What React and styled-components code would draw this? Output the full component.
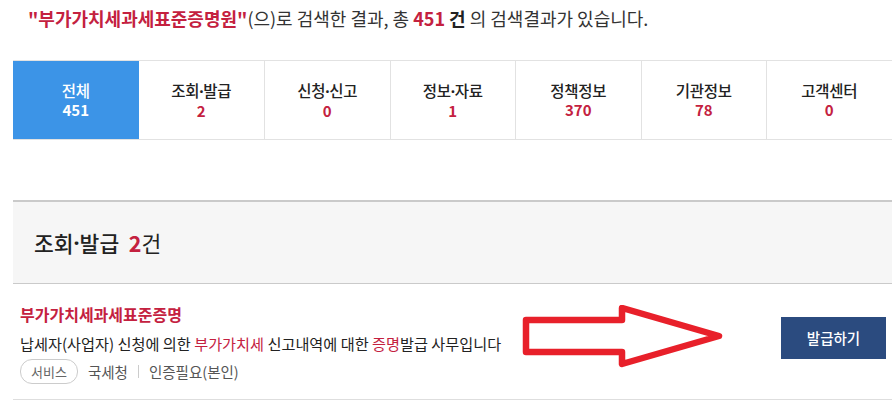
import React from 'react';
import styled, { createGlobalStyle } from 'styled-components';

const categories = [
  { label: ['조회', '발급'], count: 2 },
  { label: ['신청', '신고'], count: 0 },
  { label: ['정보', '자료'], count: 1 },
  { label: ['정책정보'], count: 370 },
  { label: ['기관정보'], count: 78 },
  { label: ['고객센터'], count: 0 },
];

// joins label parts with a narrow latin middle dot
const Dotted = ({ parts }) =>
  parts.map((p, i) => (
    <React.Fragment key={p}>
      {i > 0 && <Dot>·</Dot>}
      {p}
    </React.Fragment>
  ));

const App = () => {
  return (
    <>
      <GlobalStyle />
      <Page>
        <Summary>
          <Strong>"부가가치세과세표준증명원"</Strong>(으)로 검색한 결과, 총 <Strong>451</Strong>{' '}
          <Bold>건</Bold> 의 검색결과가 있습니다.
        </Summary>

        <Tabs>
          <Tab $active>
            <TabLabel>전체</TabLabel>
            <TabCount>451</TabCount>
          </Tab>
          {categories.map((c) => (
            <Tab key={c.label.join('')}>
              <TabLabel><Dotted parts={c.label} /></TabLabel>
              <TabCount>{c.count}</TabCount>
            </Tab>
          ))}
        </Tabs>

        <SectionHeader>
          <Dotted parts={['조회', '발급']} />{'  '}<HeaderCount>2</HeaderCount><HeaderUnit>건</HeaderUnit>
        </SectionHeader>

        <Item>
          <ItemBody>
            <ItemTitle>부가가치세과세표준증명</ItemTitle>
            <ItemDesc>
              납세자(사업자) 신청에 의한 <Mark>부가가치세</Mark> 신고내역에 대한 <Mark>증명</Mark>발급 사무입니다
            </ItemDesc>
            <Meta>
              <Pill>서비스</Pill>
              <MetaText>국세청</MetaText>
              <Divider />
              <MetaText>인증필요(본인)</MetaText>
            </Meta>
          </ItemBody>
          <IssueButton>발급하기</IssueButton>
          <Arrow width="204" height="68" viewBox="0 0 204 68">
            <path
              d="M4 15 H100 V3 L197 31 L100 59 V47 H4 Z"
              fill="none"
              stroke="#e8202a"
              strokeWidth="6.5"
              strokeLinejoin="round"
            />
          </Arrow>
        </Item>
      </Page>
    </>
  );
};

const GlobalStyle = createGlobalStyle`
  html, body {
    margin: 0;
    padding: 0;
    background: #fff;
    overflow: hidden;
  }
  body {
    font-family: "Noto Sans CJK KR", "Noto Sans", sans-serif;
    color: #333;
  }
`;

const Page = styled.div`
  width: 892px;
  padding-left: 13px;
  box-sizing: border-box;
`;

const Summary = styled.div`
  padding: 6px 0 0 15px;
  height: 24px;
  font-size: 18px;
  line-height: 24px;
  color: #333;
  white-space: nowrap;
`;

const Strong = styled.b`
  color: #c4213f;
  font-weight: 700;
`;

const Bold = styled.b`
  font-weight: 700;
  color: #222;
`;

const Dot = styled.span`
  font-family: "Noto Sans", "DejaVu Sans", sans-serif;
  font-weight: 700;
`;

const Tabs = styled.div`
  margin-top: 30px;
  display: grid;
  grid-template-columns: repeat(7, 125.5px);
  border-top: 1px solid #e2e2e2;
  border-bottom: 1px solid #e2e2e2;
  height: 78px;
  width: 892px;
`;

const Tab = styled.div`
  display: flex;
  flex-direction: column;
  align-items: center;
  justify-content: center;
  background: ${(p) => (p.$active ? '#3c94e7' : '#fff')};
  border-left: ${(p) => (p.$active ? 'none' : '1px solid #e2e2e2')};
  color: ${(p) => (p.$active ? '#fff' : '#222')};
  --count: ${(p) => (p.$active ? '#fff' : '#c4213f')};
  &:nth-child(2) {
    border-left: none;
  }
`;

const TabLabel = styled.div`
  font-size: 15.5px;
  font-weight: 500;
  line-height: 20px;
  letter-spacing: -0.3px;
`;

const TabCount = styled.div`
  font-size: 15px;
  font-weight: 700;
  line-height: 20px;
  color: var(--count);
`;

const SectionHeader = styled.div`
  margin-top: 60px;
  height: 81px;
  border-top: 2px solid #cacaca;
  border-bottom: 1px solid #cacaca;
  background: #f6f6f6;
  padding-left: 21px;
  display: flex;
  align-items: center;
  font-size: 21.5px;
  font-weight: 500;
  color: #222;
  white-space: pre;
`;

const HeaderCount = styled.span`
  color: #c4213f;
  font-weight: 700;
`;

const HeaderUnit = styled.span`
  font-weight: 400;
`;

const Item = styled.div`
  position: relative;
  display: flex;
  align-items: center;
  justify-content: space-between;
  height: 115px;
  border-bottom: 1px solid #dedede;
  padding: 0 6px 0 7px;
`;

const ItemBody = styled.div`
  display: flex;
  flex-direction: column;
  padding-top: 2px;
`;

const ItemTitle = styled.div`
  font-size: 16px;
  font-weight: 700;
  line-height: 28px;
  color: #c4213f;
`;

const ItemDesc = styled.div`
  font-size: 15.2px;
  line-height: 30px;
  color: #222;
`;

const Mark = styled.span`
  color: #c4213f;
`;

const Meta = styled.div`
  display: flex;
  align-items: center;
  gap: 10px;
  height: 28px;
`;

const Pill = styled.span`
  display: inline-flex;
  align-items: center;
  height: 23px;
  padding: 0 10px;
  border: 1px solid #ccc;
  border-radius: 12px;
  font-size: 13px;
  color: #666;
`;

const MetaText = styled.span`
  font-size: 14.5px;
  color: #555;
`;

const Divider = styled.span`
  width: 1px;
  height: 13px;
  background: #ccc;
`;

const IssueButton = styled.button`
  width: 105px;
  height: 42px;
  margin-top: -8px;
  border: none;
  background: #2b4b7f;
  color: #fff;
  font-family: inherit;
  font-size: 14.5px;
  font-weight: 500;
`;

const Arrow = styled.svg`
  position: absolute;
  left: 509px;
  top: 21px;
`;

export default App;
